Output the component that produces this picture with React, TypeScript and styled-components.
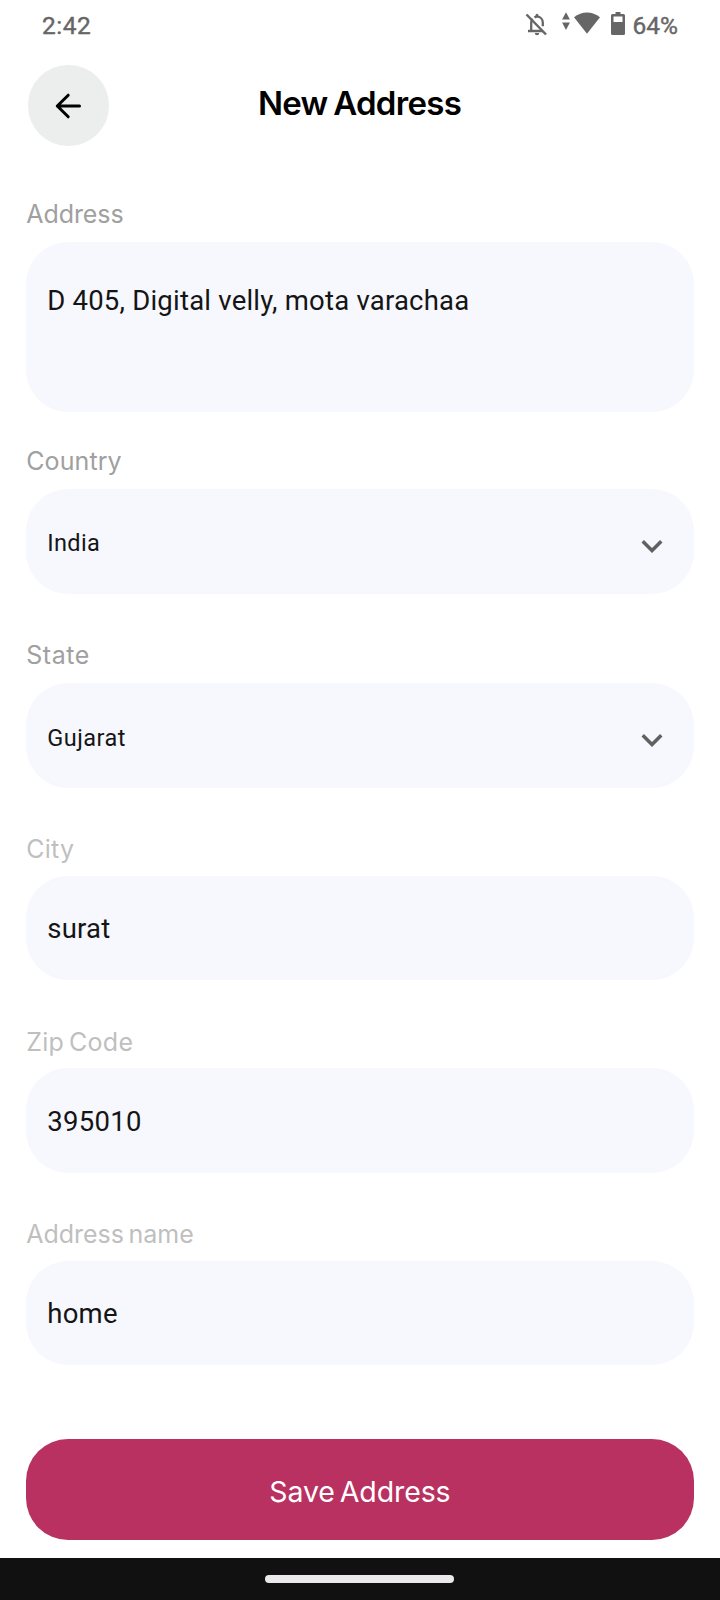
import React from "react";
import styled, { createGlobalStyle } from "styled-components";

const GlobalStyle = createGlobalStyle`
  *, *::before, *::after { box-sizing: border-box; }
  body { margin: 0; background: #fff; }
  button { border: 0; padding: 0; font: inherit; cursor: pointer; }
`;

const Screen = styled.div`
  width: 720px;
  height: 1600px;
  display: flex;
  flex-direction: column;
  overflow: hidden;
  background: #fff;
  font-family: Roboto, sans-serif;
`;

const StatusBar = styled.div`
  height: 50px;
  flex: none;
  display: flex;
  align-items: center;
  justify-content: space-between;
  padding: 1px 42px 0 42px;
  color: #666;
  font-size: 24.5px;
  font-weight: 400;
  line-height: 28px;
  -webkit-text-stroke: 0.4px #666;
`;

const Clock = styled.span`
  letter-spacing: 0.5px;
`;

const StatusIcons = styled.div`
  display: flex;
  align-items: center;
`;

const StatusGlyphs = styled.svg`
  display: block;
  width: 108px;
  height: 28px;
  margin-bottom: 3px;
`;

const Header = styled.header`
  flex: none;
  display: grid;
  grid-template-columns: 81px 1fr 81px;
  align-items: center;
  height: 81px;
  margin: 15px 28px 0;
`;

const BackButton = styled.button`
  width: 80.5px;
  height: 80.5px;
  border-radius: 50%;
  background: #ebeeed;
  display: flex;
  align-items: center;
  justify-content: center;
  padding-right: 1px;
`;

const Title = styled.h1`
  margin: 0;
  padding: 0 1px 5px 0;
  text-align: center;
  font-family: Inter, sans-serif;
  font-size: 33px;
  line-height: 40px;
  font-weight: 600;
  letter-spacing: -0.7px;
  word-spacing: -2px;
  color: #000;
`;

const Form = styled.form`
  flex: none;
  display: flex;
  flex-direction: column;
  padding: 0 26.4px 0 26.2px;
`;

const Field = styled.div<{ $space: number }>`
  display: flex;
  flex-direction: column;
  margin-top: ${(p) => p.$space}px;
`;

const Label = styled.label<{ $muted?: boolean; $gap: number; $track?: number }>`
  height: 32px;
  line-height: 32px;
  margin-bottom: ${(p) => p.$gap}px;
  font-family: Inter, sans-serif;
  font-size: 25px;
  letter-spacing: ${(p) => p.$track ?? 0}px;
  word-spacing: -2.5px;
  white-space: nowrap;
  color: ${(p) => (p.$muted ? "#bfbfbf" : "#a0a0a0")};
`;

const Box = styled.div<{ $tall?: boolean }>`
  height: ${(p) => (p.$tall ? 170 : 104.7)}px;
  display: flex;
  align-items: ${(p) => (p.$tall ? "flex-start" : "center")};
  justify-content: space-between;
  padding: ${(p) => (p.$tall ? "42px 21px" : "1px 21px 0")};
  border-radius: 42px;
  background: #f7f8fd;
`;

const Value = styled.span<{ $small?: boolean; $track?: number; $drop?: number }>`
  font-size: ${(p) => (p.$small ? 23.5 : 27.5)}px;
  line-height: 33px;
  padding-top: ${(p) => p.$drop ?? 0}px;
  letter-spacing: ${(p) => p.$track ?? 0}px;
  white-space: nowrap;
  color: #151515;
`;

const Chevron = styled.svg`
  width: 42px;
  height: 42px;
  margin-top: 8px;
`;

const SaveButton = styled.button`
  height: 101.3px;
  margin-top: 73.6px;
  border-radius: 42px;
  background: #b93160;
  color: #fff;
  font-family: Inter, sans-serif;
  font-size: 28.5px;
  line-height: 36px;
  letter-spacing: -0.1px;
  word-spacing: -3px;
  padding-top: 4px;
`;

const NavBar = styled.div`
  height: 42px;
  flex: none;
  margin-top: auto;
  display: flex;
  justify-content: center;
  align-items: center;
  padding-right: 1px;
  background: #111;
`;

const HomePill = styled.div`
  width: 189px;
  height: 7.6px;
  border-radius: 4px;
  background: #ebe9ec;
`;

const fields = [
  { label: "Address", value: "D 405, Digital velly, mota varachaa", tall: true, space: 51.5, gap: 12.5, track: -0.05, vTrack: 0.22 },
  { label: "Country", value: "India", select: true, space: 32.6, gap: 12.4, track: 0.1, vTrack: 0.4, drop: 3 },
  { label: "State", value: "Gujarat", select: true, space: 45.3, gap: 12.3, track: 0.55, vTrack: 0.5, drop: 4.5 },
  { label: "City", value: "surat", muted: true, space: 44.7, gap: 11.1, track: 0.3, vTrack: 0.25 },
  { label: "Zip Code", value: "395010", muted: true, space: 45.2, gap: 10.4, track: 0.3, vTrack: 0.3, drop: 1.5 },
  { label: "Address name", value: "home", muted: true, space: 45.1, gap: 10.8, track: 0, vTrack: 0.3 },
];

export default function App() {
  return (
    <Screen>
      <GlobalStyle />
      <StatusBar>
        <Clock>2:42</Clock>
        <StatusIcons>
          <StatusGlyphs viewBox="525 10 108 28" fill="currentColor">
            <g fill="none" stroke="currentColor" strokeWidth="2.3">
              <path d="M526.5 14.5 546 34.5" strokeWidth="2.5" />
              <path d="M528 31h15M531.2 31v-8.5q0-2 1.2-3.8M534.5 17.5q1-.8 2.5-.8c3.6 0 5.8 2.6 5.8 6v3.5" />
            </g>
            <path d="M535.5 16v-.8a1.5 1.5 0 0 1 3 0v.8zM534.8 33h4.4a2.2 2.2 0 0 1-4.4 0z" />
            <path d="M566 12.2l3.9 7.3h-7.8zM566 30l-3.9-7.4h7.8z" />
            <path d="M587 33.8 574 17.3c7.5-6.4 18.5-6.4 26 0z" />
            <path fillRule="evenodd" d="M615.5 12h5v2h3a1.5 1.5 0 0 1 1.5 1.5v18a1.5 1.5 0 0 1-1.5 1.5h-11a1.5 1.5 0 0 1-1.5-1.5v-18a1.5 1.5 0 0 1 1.5-1.5h3zM613.5 16.5v5.5h9v-5.5z" />
          </StatusGlyphs>
          <span>64%</span>
        </StatusIcons>
      </StatusBar>
      <Header>
        <BackButton type="button" aria-label="Back">
          <svg width="26" height="26" viewBox="0 0 26 26" fill="none" stroke="#000" strokeWidth="3" strokeLinecap="round" strokeLinejoin="round">
            <path d="M24.500 13H2.300M13.200 2.200 2.300 13l10.900 10.800" />
          </svg>
        </BackButton>
        <Title>New Address</Title>
      </Header>
      <Form onSubmit={(e) => e.preventDefault()}>
        {fields.map((f) => (
          <Field key={f.label} $space={f.space}>
            <Label $muted={f.muted} $gap={f.gap} $track={f.track}>{f.label}</Label>
            <Box $tall={f.tall}>
              <Value $small={f.select} $track={f.vTrack} $drop={f.drop}>{f.value}</Value>
              {f.select && (
                <Chevron viewBox="0 0 24 24" fill="#616161">
                  <path d="M7.41 8.59 12 13.17l4.59-4.58L18 10l-6 6-6-6z" />
                </Chevron>
              )}
            </Box>
          </Field>
        ))}
        <SaveButton type="submit">Save Address</SaveButton>
      </Form>
      <NavBar>
        <HomePill />
      </NavBar>
    </Screen>
  );
}
